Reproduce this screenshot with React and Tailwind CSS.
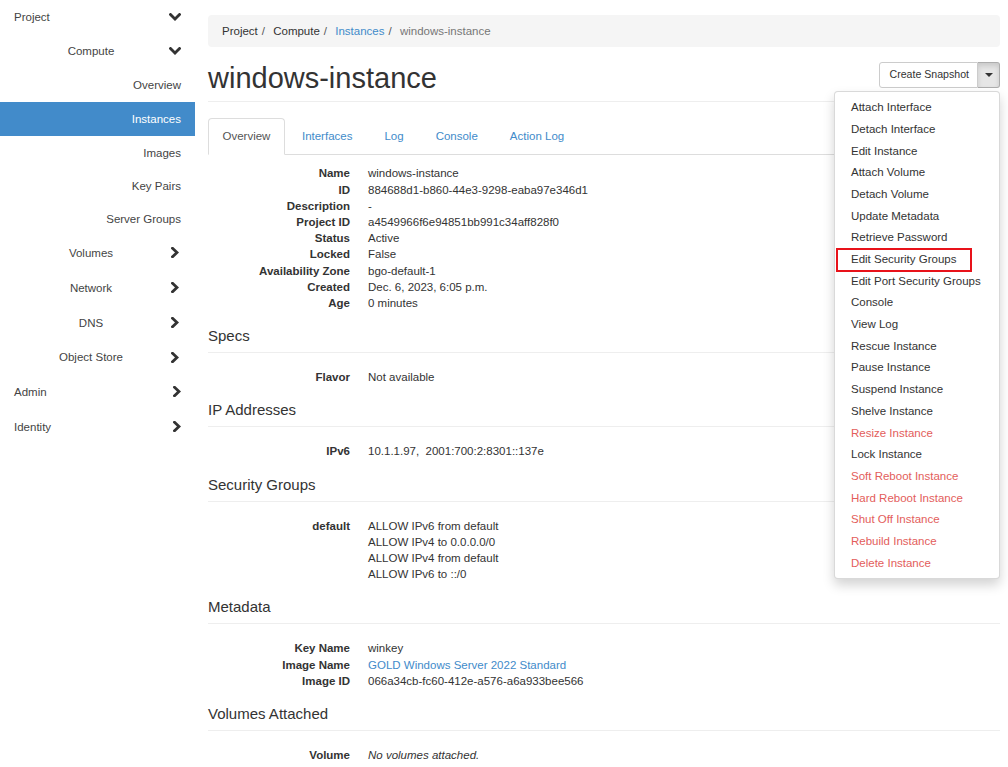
import React from "react";

const FONT = { fontFamily: '"Liberation Sans", Arial, Helvetica, sans-serif' };

function ChevronDown() {
  return (
    <svg width="12" height="8" viewBox="0 0 12 8" className="block">
      <polyline points="1.5,1.5 6,6 10.5,1.5" fill="none" stroke="#333" strokeWidth="2.8" strokeLinecap="square" />
    </svg>
  );
}
function ChevronRight() {
  return (
    <svg width="8" height="11" viewBox="0 0 8 11" className="block">
      <polyline points="1.5,1.2 6,5.5 1.5,9.8" fill="none" stroke="#333" strokeWidth="2.8" strokeLinecap="square" />
    </svg>
  );
}

function Sidebar() {
  const L1 = ({ label, open, h = "h-[35px]" }) => (
    <div className={`${h} flex items-center pl-[14px] pr-[14px] justify-between text-[#444]`}>
      <span>{label}</span>
      {open ? <ChevronDown /> : <ChevronRight />}
    </div>
  );
  const L2 = ({ label, open, h = "h-[35px]" }) => (
    <div className={`${h} flex items-center pr-[14px] text-[#444]`}>
      <span className="flex-1 text-center pl-[13px]">{label}</span>
      <span className="w-[12px] flex justify-center">{open ? <ChevronDown /> : <ChevronRight />}</span>
    </div>
  );
  const L3 = ({ label, active, h = "h-[33px]" }) => (
    <div
      className={`${h} flex items-center justify-end pr-[14px] ${
        active ? "bg-[#428bca] text-white" : "text-[#444]"
      }`}
    >
      {label}
    </div>
  );
  return (
    <div className="w-[195px] shrink-0 text-[11.5px] leading-[16px]">
      <L1 label="Project" open h="h-[33px]" />
      <L2 label="Compute" open />
      <L3 label="Overview" h="h-[34px]" />
      <L3 label="Instances" active h="h-[34px]" />
      <L3 label="Images" />
      <L3 label="Key Pairs" />
      <L3 label="Server Groups" />
      <L2 label="Volumes" />
      <L2 label="Network" />
      <L2 label="DNS" />
      <L2 label="Object Store" h="h-[34px]" />
      <L1 label="Admin" />
      <L1 label="Identity" />
    </div>
  );
}

const MENU = [
  ["Attach Interface"],
  ["Detach Interface"],
  ["Edit Instance"],
  ["Attach Volume"],
  ["Detach Volume"],
  ["Update Metadata"],
  ["Retrieve Password"],
  ["Edit Security Groups", false, true],
  ["Edit Port Security Groups"],
  ["Console"],
  ["View Log"],
  ["Rescue Instance"],
  ["Pause Instance"],
  ["Suspend Instance"],
  ["Shelve Instance"],
  ["Resize Instance", true],
  ["Lock Instance"],
  ["Soft Reboot Instance", true],
  ["Hard Reboot Instance", true],
  ["Shut Off Instance", true],
  ["Rebuild Instance", true],
  ["Delete Instance", true],
];

function ActionButton() {
  return (
    <div className="relative flex mt-[1px]">
      <div className="h-[26px] flex items-center pl-[9px] pr-[8px] border border-[#ccc] rounded-l-[3px] bg-white text-[#333] text-[10.6px]">
        Create Snapshot
      </div>
      <div className="h-[26px] w-[22px] flex items-center justify-center border border-l-0 border-[#adadad] rounded-r-[3px] bg-[#e6e6e6] shadow-[inset_0_3px_5px_rgba(0,0,0,0.125)]">
        <span className="block w-0 h-0 border-l-[4px] border-r-[4px] border-t-[4px] border-l-transparent border-r-transparent border-t-[#333]" />
      </div>
      <div className="absolute right-0 top-[29px] w-[166px] bg-white border border-[rgba(0,0,0,0.15)] rounded-[4px] shadow-[0_6px_12px_rgba(0,0,0,0.175)] pt-[5px] pb-[4px] z-10">
        {MENU.map(([label, danger, boxed]) => (
          <div
            key={label}
            className={`relative h-[21.7px] flex items-center pl-[16px] text-[11.5px] whitespace-nowrap ${
              danger ? "text-[#e35d5b]" : "text-[#333]"
            }`}
          >
            {label}
            {boxed && (
              <div className="absolute left-[1px] top-[-1px] w-[136px] h-[24px] border-2 border-[#e8121a]" />
            )}
          </div>
        ))}
      </div>
    </div>
  );
}

function DL({ rows, className = "" }) {
  return (
    <div className={`grid grid-cols-[142px_1fr] gap-x-[18px] text-[11.5px] leading-[16.2px] text-[#333] ${className}`}>
      {rows.map(([k, v], i) => (
        <React.Fragment key={i}>
          <div className="font-bold text-right">{k}</div>
          <div>{v}</div>
        </React.Fragment>
      ))}
    </div>
  );
}

function Section({ title, rows }) {
  return (
    <div>
      <div className="mt-[15px] text-[15px] leading-[20px] pb-[6px] border-b border-[#eee] text-[#333]">{title}</div>
      <DL rows={rows} className="mt-[16px]" />
    </div>
  );
}

export default function App() {
  return (
    <div style={FONT} className="flex min-h-[767px] bg-white text-[#333]">
      <Sidebar />
      <div className="flex-1 pl-[13px] pr-[8px] pt-[15px] min-w-0">
        <div className="h-[32px] flex items-center bg-[#f5f5f5] rounded-[4px] pl-[14px] pt-[1px] text-[11.5px]">
          <span className="text-[#333]">Project</span>
          <span className="text-[#555] pl-[4px] pr-[5px]">/&nbsp;</span>
          <span className="text-[#333]">Compute</span>
          <span className="text-[#555] pl-[4px] pr-[5px]">/&nbsp;</span>
          <span className="text-[#428bca]">Instances</span>
          <span className="text-[#555] pl-[4px] pr-[5px]">/&nbsp;</span>
          <span className="text-[#777]">windows-instance</span>
        </div>

        <div className="mt-[14px] flex justify-between items-start border-b border-[#eee] pb-[6px]">
          <div className="text-[29px] leading-[33px] pt-[1px] text-[#333]">windows-instance</div>
          <ActionButton />
        </div>

        <div className="mt-[16px] flex border-b border-[#ddd] text-[11.5px] leading-[16.4px]">
          <div className="px-[13.5px] py-[9px] border border-[#ddd] border-b-white rounded-t-[4px] -mb-[1px] bg-white text-[#555] mr-[2px]">
            Overview
          </div>
          {["Interfaces", "Log", "Console", "Action Log"].map((t) => (
            <div key={t} className="px-[14px] py-[9px] border border-transparent text-[#428bca] mr-[2px]">
              {t}
            </div>
          ))}
        </div>

        <DL
          className="mt-[10px]"
          rows={[
            ["Name", "windows-instance"],
            ["ID", "884688d1-b860-44e3-9298-eaba97e346d1"],
            ["Description", "-"],
            ["Project ID", "a4549966f6e94851bb991c34aff828f0"],
            ["Status", "Active"],
            ["Locked", "False"],
            ["Availability Zone", "bgo-default-1"],
            ["Created", "Dec. 6, 2023, 6:05 p.m."],
            ["Age", "0 minutes"],
          ]}
        />

        <Section title="Specs" rows={[["Flavor", "Not available"]]} />
        <Section title="IP Addresses" rows={[["IPv6", <span>10.1.1.97,&nbsp; 2001:700:2:8301::137e</span>]]} />
        <Section
          title="Security Groups"
          rows={[
            [
              "default",
              <div>
                <div>ALLOW IPv6 from default</div>
                <div>ALLOW IPv4 to 0.0.0.0/0</div>
                <div>ALLOW IPv4 from default</div>
                <div>ALLOW IPv6 to ::/0</div>
              </div>,
            ],
          ]}
        />
        <Section
          title="Metadata"
          rows={[
            ["Key Name", "winkey"],
            ["Image Name", <span className="text-[#428bca]">GOLD Windows Server 2022 Standard</span>],
            ["Image ID", "066a34cb-fc60-412e-a576-a6a933bee566"],
          ]}
        />
        <Section title="Volumes Attached" rows={[["Volume", <em>No volumes attached.</em>]]} />
      </div>
    </div>
  );
}
